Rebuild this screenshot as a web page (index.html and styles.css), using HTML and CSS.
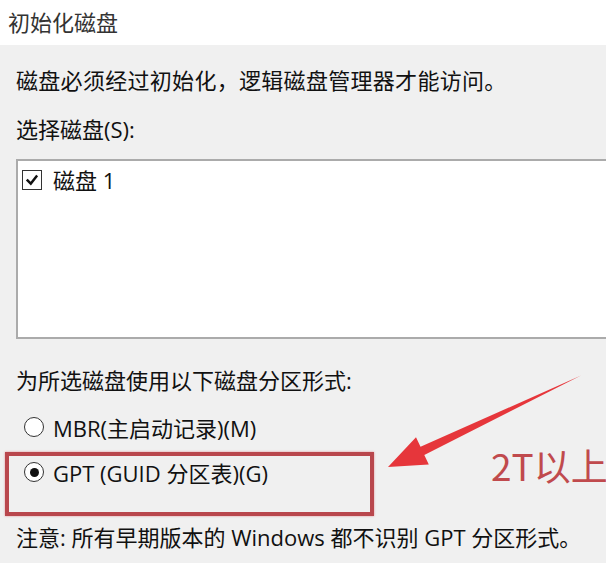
FILE: index.html
```html
<!DOCTYPE html>
<html lang="zh-CN">
<head>
<meta charset="utf-8">
<title>初始化磁盘</title>
<link rel="stylesheet" href="styles.css">
</head>
<body>
<div class="dialog">
  <div class="titlebar">初始化磁盘</div>
  <div class="content">
    <p class="line intro">磁盘必须经过初始化，逻辑磁盘管理器才能访问。</p>
    <p class="line select-label">选择磁盘(S):</p>
    <div class="listbox">
      <div class="list-row">
        <span class="checkbox">
          <svg viewBox="0 0 20 20" width="20" height="20"><path d="M4.5 10.5 L8.5 14.5 L15.5 5.5" fill="none" stroke="#111" stroke-width="3" stroke-linecap="square"/></svg>
        </span>
        <span class="list-text">磁盘 1</span>
      </div>
    </div>
    <p class="line style-label">为所选磁盘使用以下磁盘分区形式:</p>
    <div class="radio-row mbr">
      <span class="radio"></span>
      <span class="radio-text">MBR(主启动记录)(M)</span>
    </div>
    <div class="radio-row gpt">
      <span class="radio checked"></span>
      <span class="radio-text">GPT (GUID 分区表)(G)</span>
    </div>
    <p class="line note">注意: 所有早期版本的 Windows 都不识别 GPT 分区形式。</p>
  </div>
  <div class="highlight-box"></div>
  <div class="annotation">2T以上统</div>
  <svg class="arrow" width="606" height="563" viewBox="0 0 606 563">
    <polygon points="581,375.5 424.3,455 428.8,464.5 388,467 416,437.3 420.5,446.8" fill="#e6363b"/>
  </svg>
</div>
</body>
</html>
```
FILE: styles.css
```css
html, body {
  margin: 0;
  padding: 0;
}
body {
  width: 606px;
  height: 563px;
  overflow: hidden;
  background: #f0f0f0;
  font-family: "Open Sans", "Noto Sans CJK SC", sans-serif;
  color: #111;
}
.dialog {
  position: relative;
  width: 606px;
  height: 563px;
  overflow: hidden;
  background: #f0f0f0;
}
.titlebar {
  height: 45px;
  line-height: 43px;
  background: #ffffff;
  padding-left: 8px;
  font-size: 22px;
  color: #333;
  font-family: "Noto Sans CJK SC", sans-serif;
}
.content {
  padding-left: 16px;
}
.line {
  margin: 0;
  font-size: 22px;
  line-height: 30px;
  white-space: nowrap;
}
.intro {
  margin-top: 19px;
  font-family: "Noto Sans CJK SC", sans-serif;
  letter-spacing: 0.3px;
}
.select-label {
  margin-top: 20px;
}
.listbox {
  margin-top: 15px;
  width: 610px;
  height: 168px;
  background: #fff;
  border: 2px solid #ababab;
  border-right: none;
  padding-top: 8px;
  box-sizing: content-box;
}
.list-row {
  display: flex;
  align-items: center;
  padding-left: 4px;
  height: 22px;
}
.checkbox {
  width: 18px;
  height: 18px;
  border: 1px solid #333;
  background: #fff;
  display: flex;
  align-items: center;
  justify-content: center;
  margin-right: 11px;
}
.checkbox svg {
  width: 16px;
  height: 16px;
}
.list-text {
  font-size: 22px;
  line-height: 22px;
}
.style-label {
  margin-top: 26px;
}
.radio-row {
  display: flex;
  align-items: center;
  padding-left: 8px;
  height: 30px;
  font-size: 22px;
}
.mbr {
  margin-top: 17px;
}
.gpt {
  margin-top: 15px;
}
.radio {
  width: 18px;
  height: 18px;
  border: 1.5px solid #333;
  border-radius: 50%;
  background: #fff;
  margin-right: 9px;
  display: flex;
  align-items: center;
  justify-content: center;
}
.radio.checked::after {
  content: "";
  width: 9px;
  height: 9px;
  border-radius: 50%;
  background: #111;
}
.note {
  margin-top: 35px;
}
.highlight-box {
  position: absolute;
  left: 5px;
  top: 452px;
  width: 361px;
  height: 56px;
  border: 4px solid #b9474d;
  box-shadow: 0 0 2px rgba(220, 80, 90, 0.6);
}
.annotation {
  position: absolute;
  left: 491px;
  top: 443px;
  font-size: 37px;
  line-height: 44px;
  color: #c04a4d;
  white-space: nowrap;
  font-family: "Noto Sans CJK SC", sans-serif;
}
.arrow {
  position: absolute;
  left: 0;
  top: 0;
}
```
